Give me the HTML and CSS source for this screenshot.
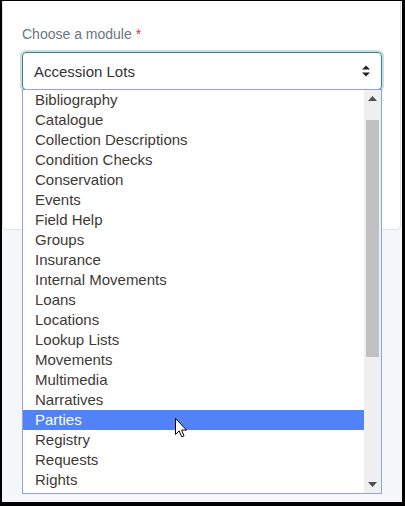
FILE: index.html
```html
<!DOCTYPE html>
<html>
<head>
<meta charset="utf-8">
<link rel="stylesheet" href="styles.css">
</head>
<body>
<div class="frame">
  <div class="card">
    <label class="label">Choose a module <span class="req">*</span></label>
    <div class="select">
      <span class="select-value">Accession Lots</span>
      <svg class="select-caret" width="8" height="12" viewBox="0 0 8 12">
        <path d="M0 4.5 L4 0.5 L8 4.5 Z M0 7.5 L4 11.5 L8 7.5 Z" fill="#222"/>
      </svg>
    </div>
  </div>

  <div class="listbox">
    <ul class="options">
      <li>Bibliography</li>
      <li>Catalogue</li>
      <li>Collection Descriptions</li>
      <li>Condition Checks</li>
      <li>Conservation</li>
      <li>Events</li>
      <li>Field Help</li>
      <li>Groups</li>
      <li>Insurance</li>
      <li>Internal Movements</li>
      <li>Loans</li>
      <li>Locations</li>
      <li>Lookup Lists</li>
      <li>Movements</li>
      <li>Multimedia</li>
      <li>Narratives</li>
      <li class="active">Parties</li>
      <li>Registry</li>
      <li>Requests</li>
      <li>Rights</li>
    </ul>
    <div class="scrollbar">
      <div class="sb-btn">
        <svg width="9" height="5" viewBox="0 0 9 5"><path d="M0 5 L4.5 0 L9 5 Z" fill="#505050"/></svg>
      </div>
      <div class="sb-track"><div class="sb-thumb"></div></div>
      <div class="sb-btn">
        <svg width="9" height="5" viewBox="0 0 9 5"><path d="M0 0 L4.5 5 L9 0 Z" fill="#505050"/></svg>
      </div>
    </div>
  </div>

  <svg class="cursor" width="13" height="21" viewBox="0 0 13 21">
    <path d="M0.5 0.5 L0.5 16.5 L4.2 12.9 L6.7 18.8 L9 17.8 L6.6 12.1 L11.6 12.1 Z" fill="#fff" stroke="#000" stroke-width="1" stroke-linejoin="miter"/>
  </svg>
</div>
</body>
</html>
```

FILE: styles.css
```css
html, body {
  margin: 0;
  padding: 0;
}

body {
  font-family: "Liberation Sans", Arial, sans-serif;
}

.frame {
  position: relative;
  width: 405px;
  height: 506px;
  box-sizing: border-box;
  border-style: solid;
  border-color: #000;
  border-width: 1px 3px 4px 2px;
  background: #f5f7fa;
  overflow: hidden;
}

.card {
  width: 399px;
  height: 229px;
  box-sizing: border-box;
  background: #fff;
  border: 1px solid #dfe1e4;
  border-top: none;
  border-radius: 0 0 5px 5px;
  padding: 23px 19px 0 19px;
  display: flex;
  flex-direction: column;
  gap: 8px;
}

.label {
  font-size: 14px;
  line-height: 20px;
  color: #6c757d;
}

.req {
  color: #dc3545;
}

.select {
  width: 360px;
  height: 38px;
  box-sizing: border-box;
  border: 1px solid #3d7f80;
  border-radius: 4px;
  box-shadow: 0 0 0 2px #c5e1e0;
  display: flex;
  align-items: center;
  justify-content: space-between;
  padding: 0 11px 0 11px;
}

.select-value {
  font-size: 15px;
  color: #333;
}

.select-caret {
  display: block;
}

.listbox {
  position: absolute;
  left: 20px;
  top: 88px;
  width: 360px;
  height: 405px;
  box-sizing: border-box;
  border: 1px solid #8da4e4;
  background: #fff;
  display: grid;
  grid-template-columns: 1fr 17px;
}

.options {
  list-style: none;
  margin: 0;
  padding: 0;
  overflow: hidden;
}

.options li {
  height: 20px;
  line-height: 20px;
  font-size: 15px;
  padding-left: 12px;
  color: #3d3a36;
  white-space: nowrap;
}

.options li.active {
  background: #5282f8;
  color: #fff;
}

.scrollbar {
  background: #f0f0f0;
  display: flex;
  flex-direction: column;
}

.sb-btn {
  height: 17px;
  display: flex;
  align-items: center;
  justify-content: center;
}

.sb-track {
  flex: 1;
  padding-top: 13px;
}

.sb-thumb {
  width: 13px;
  margin-left: 2px;
  height: 237px;
  background: #c1c1c1;
}

.cursor {
  position: absolute;
  left: 173px;
  top: 417px;
}
```
